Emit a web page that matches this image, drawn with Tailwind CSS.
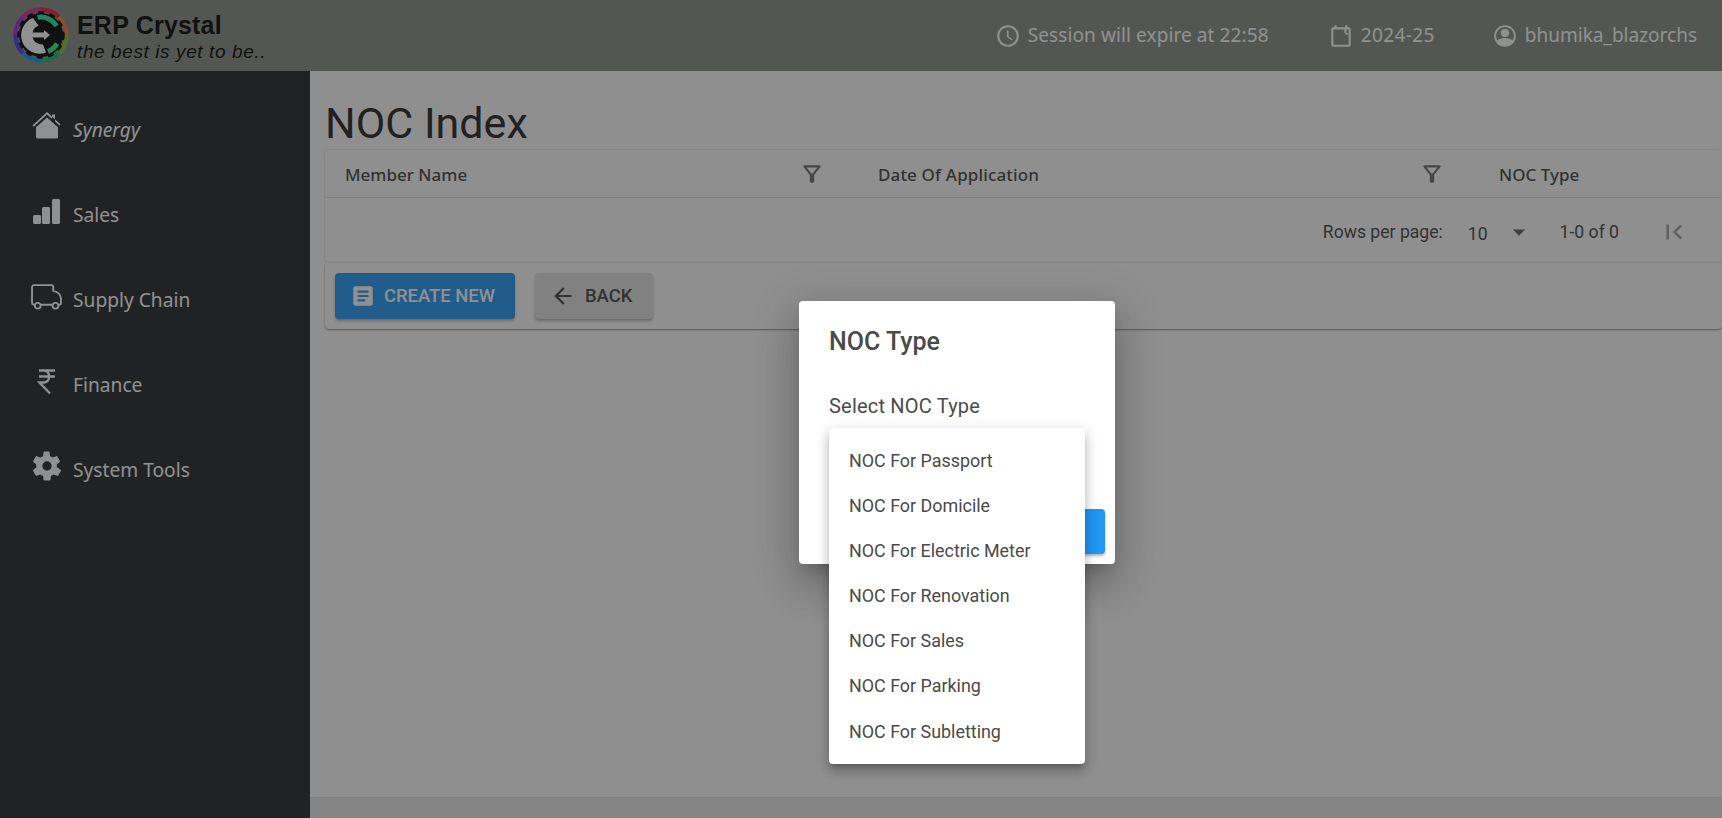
<!DOCTYPE html>
<html lang="en">
<head>
  <meta charset="UTF-8">
  <title>NOC Index</title>
  <script src="https://cdn.jsdelivr.net/npm/@tailwindcss/browser@4"></script>
</head>
<body class="relative h-screen w-screen overflow-hidden bg-[#fdfdfd] font-['Roboto',sans-serif]">
  <div class="flex h-full flex-col">
    <!-- Top bar -->
    <header class="flex h-[71px] shrink-0 items-center bg-[#878b85] font-['Noto_Sans',sans-serif] text-white">
      <svg class="ml-[13px] h-[57px] w-[57px] shrink-0" viewBox="0 0 57 57">
        <g fill="none" stroke-width="4.500">
          <path d="M28 2.500A25.500 25.500 0 0 1 46 10" stroke="#e82030"/>
          <path d="M46 10A25.500 25.500 0 0 1 53.500 28" stroke="#e88030"/>
          <path d="M53.500 28A25.500 25.500 0 0 1 46 46" stroke="#80c030"/>
          <path d="M46 46A25.500 25.500 0 0 1 28 53.500" stroke="#20b070"/>
          <path d="M28 53.500A25.500 25.500 0 0 1 10 46" stroke="#2090e8"/>
          <path d="M10 46A25.500 25.500 0 0 1 2.500 28" stroke="#4838e0"/>
          <path d="M2.500 28A25.500 25.500 0 0 1 10 10" stroke="#9030d0"/>
          <path d="M10 10A25.500 25.500 0 0 1 28 2.500" stroke="#d03088"/>
        </g>
        <circle cx="28" cy="28" r="22" fill="#000"/>
        <circle cx="28" cy="28" r="22.500" fill="none" stroke="#000" stroke-width="2.500" stroke-linecap="round" stroke-dasharray="4 7.500"/>
        <path d="M24.500 10.400A18 18 0 0 1 43.500 19" fill="none" stroke="#20e8a0" stroke-width="5"/>
        <path d="M44 36.500A18 18 0 0 1 35 44.600" fill="none" stroke="#30f070" stroke-width="5"/>
        <path d="M20 11A18 18 0 0 0 33 45.500L30 37.500A10 10 0 0 1 19.500 30.500H31V33L37 28L31 23V25.500H19.500A10 10 0 0 1 25.500 18.500Z" fill="#fff"/>
      </svg>
      <div class="ml-[7px] flex translate-y-[1px] flex-col font-['Liberation_Sans',sans-serif] text-black">
        <span class="text-[25px] leading-[27px] font-bold tracking-[0.2px]">ERP Crystal</span>
        <span class="pt-[2px] text-[19px] leading-[21px] tracking-[0.6px] italic">the best is yet to be..</span>
      </div>
      <div class="ml-auto flex items-center pr-[25px] text-[19px]">
        <svg class="mr-[7px] h-[26px] w-[26px] fill-current" viewBox="0 0 24 24"><path d="M11.990 2C6.470 2 2 6.480 2 12s4.470 10 9.990 10C17.520 22 22 17.520 22 12S17.520 2 11.990 2zM12 20c-4.420 0-8-3.580-8-8s3.580-8 8-8 8 3.580 8 8-3.580 8-8 8zm.5-13H11v6l4.500 3.150.75-1.230-3.750-2.670z"/></svg>
        <span class="tracking-[0.1px]">Session will expire at 22:58</span>
        <svg class="mr-[7px] ml-[59px] h-[26px] w-[26px] fill-current" viewBox="0 0 24 24"><path d="M19 4h-1V2h-2v2H8V2H6v2H5c-1.100 0-2 .9-2 2v14c0 1.100.9 2 2 2h14c1.100 0 2-.9 2-2V6c0-1.100-.9-2-2-2zm0 16H5V6h10v3h2V6h2v14zm-3-9h2V9h-2v2z"/></svg>
        <span class="tracking-[0.4px]">2024-25</span>
        <svg class="mr-[7px] ml-[57px] h-[26px] w-[26px] fill-current" viewBox="0 0 24 24"><path fill-rule="evenodd" d="M12 2C6.480 2 2 6.480 2 12s4.480 10 10 10 10-4.480 10-10S17.520 2 12 2zm0 1.800c4.500 0 8.200 3.700 8.200 8.200 0 1.500-.4 2.900-1.100 4.100C17.600 14.600 15 13.800 12 13.800s-5.600.8-7.100 2.300c-.7-1.200-1.100-2.600-1.100-4.100 0-4.500 3.700-8.200 8.200-8.200zM12 5.500a3.800 3.800 0 1 0 0 7.600 3.800 3.800 0 0 0 0-7.600z"/></svg>
        <span>bhumika_blazorchs</span>
      </div>
    </header>

    <div class="flex min-h-0 flex-1">
      <!-- Sidebar -->
      <aside class="flex w-[310px] shrink-0 flex-col bg-[#212325] pt-[17px] pl-[31px] font-['Noto_Sans',sans-serif] text-[19.200px] text-white">
        <a class="flex h-[85px] items-center">
          <svg class="h-[30px] w-[30px] -translate-y-[5px] fill-current" viewBox="0 0 30 30"><path d="M16 1L1.500 14.500l1.200 1.300L16 3.500l5 4.400V3.500h3v7l4.300 4 1.200-1.300L16 1z"/><path d="M16 6.500L5 16.300V26a1.500 1.500 0 0 0 1.500 1.500h19A1.500 1.500 0 0 0 27 26V16.300L16 6.500z"/></svg>
          <span class="ml-[12px] italic">Synergy</span>
        </a>
        <a class="flex h-[85px] items-center">
          <svg class="h-[30px] w-[30px] -translate-y-[3px] fill-current" viewBox="0 0 30 30"><rect x="2" y="17" width="8" height="9" rx="1.500"/><rect x="11" y="9" width="8" height="17" rx="1.500"/><rect x="21" y="1" width="8" height="25" rx="1.500"/></svg>
          <span class="ml-[12px]">Sales</span>
        </a>
        <a class="flex h-[85px] items-center">
          <svg class="h-[31px] w-[31px] -translate-y-[4px]" viewBox="0 0 30 30" fill="none" stroke="currentColor" stroke-width="1.800"><path d="M3.500 23H3A2 2 0 0 1 1 21V6A2 2 0 0 1 3 4H20A1.500 1.500 0 0 1 21.500 5.500V9.500C25.500 10 29 13 29 17V21.500A1.500 1.500 0 0 1 27.500 23H27M9.500 23H20.500"/><circle cx="6.500" cy="24" r="2.800"/><circle cx="23.700" cy="24" r="2.800"/></svg>
          <span class="ml-[11px]">Supply Chain</span>
        </a>
        <a class="flex h-[85px] items-center">
          <svg class="h-[30px] w-[30px] -translate-y-[5px]" viewBox="0 0 30 30" fill="none" stroke="currentColor" stroke-width="2.400"><path d="M8 4.500H24M8 10.500H24M8 4.500H12.500C20 4.500 20 16.500 12.500 16.500H8.500L19 27.500"/></svg>
          <span class="ml-[12px]">Finance</span>
        </a>
        <a class="flex h-[85px] items-center">
          <svg class="h-[32px] w-[32px] -translate-y-[5px] fill-current" viewBox="0 0 24 24"><path fill-rule="evenodd" d="M19.300 13.200c.1-.4.100-.8.100-1.200s0-.8-.1-1.200l2.300-1.800c.2-.2.300-.5.100-.7l-2-3.500c-.1-.2-.4-.3-.7-.2l-2.700 1.100c-.6-.5-1.300-.9-2-1.100l-.4-2.900c0-.3-.3-.5-.5-.5H9.900c-.3 0-.5.200-.5.500L9 4.600c-.7.300-1.400.7-2 1.100L4.300 4.600c-.3-.1-.5 0-.7.200l-2 3.500c-.1.200-.1.500.1.700l2.300 1.800c0 .4-.1.800-.1 1.200s0 .8.100 1.200L1.700 15c-.2.200-.3.500-.1.700l2 3.500c.1.200.4.300.7.200L7 18.300c.6.500 1.300.9 2 1.100l.4 2.900c0 .3.300.5.500.5h4.200c.3 0 .5-.2.500-.5l.4-2.900c.7-.3 1.400-.7 2-1.100l2.700 1.100c.3.100.5 0 .7-.2l2-3.500c.1-.2.100-.5-.1-.7l-2.300-1.800zM12 15.500a3.500 3.500 0 1 1 0-7 3.500 3.500 0 0 1 0 7z"/></svg>
          <span class="ml-[10px]">System Tools</span>
        </a>
      </aside>

      <!-- Main -->
      <main class="flex min-w-0 flex-1 flex-col">
        <div class="flex-1 pt-[24px] pl-[15px]">
          <h1 class="h-[55px] text-[43px] leading-[57px] text-[#212121]">NOC Index</h1>
          <section class="rounded-[4px] shadow-[0_0_2px_rgba(0,0,0,0.25)]">
            <div class="flex h-[48px] items-center border-b border-[#dcdcdc] font-['Noto_Sans',sans-serif] text-[17px] font-medium text-[#424242]">
              <div class="flex w-[532px] shrink-0 items-center pl-[20px]">
                <span class="translate-y-[1px]">Member Name</span>
                <svg class="mr-[32px] ml-auto h-[26px] w-[26px] fill-[#6b6b6b]" viewBox="0 0 24 24"><path d="M7 6h10l-5.010 6.300L7 6zm-2.750-.39C6.270 8.200 10 13 10 13v6c0 .55.45 1 1 1h2c.55 0 1-.45 1-1v-6s3.730-4.800 5.750-7.390C20.260 4.950 19.790 4 18.950 4H5.040c-.83 0-1.300.95-.79 1.610z"/></svg>
              </div>
              <div class="flex w-[621px] shrink-0 items-center pl-[21px]">
                <span class="translate-y-[1px] tracking-[0.15px]">Date Of Application</span>
                <svg class="mr-[33px] ml-auto h-[26px] w-[26px] fill-[#6b6b6b]" viewBox="0 0 24 24"><path d="M7 6h10l-5.010 6.300L7 6zm-2.750-.39C6.270 8.200 10 13 10 13v6c0 .55.45 1 1 1h2c.55 0 1-.45 1-1v-6s3.730-4.800 5.750-7.390C20.260 4.950 19.790 4 18.950 4H5.040c-.83 0-1.300.95-.79 1.610z"/></svg>
              </div>
              <div class="translate-y-[1px] pl-[21px]">NOC Type</div>
            </div>
            <div class="flex h-[64px] items-center justify-end pt-[4px] pr-[33px] text-[17.600px] text-[#424242]">
              <span>Rows per page:</span>
              <span class="ml-[25px] translate-y-[2px]">10</span>
              <svg class="ml-[16px] h-[30px] w-[30px] fill-[#616161]" viewBox="0 0 24 24"><path d="M7 10l5 5 5-5z"/></svg>
              <span class="ml-[26px]">1-0 of 0</span>
              <svg class="ml-[40px] h-[30px] w-[30px] fill-[#9e9e9e]" viewBox="0 0 24 24"><path d="M18.410 16.590L13.820 12l4.590-4.590L17 6l-6 6 6 6zM6 6h2v12H6z"/></svg>
            </div>
          </section>
          <section class="flex h-[67px] items-center gap-[20px] rounded-[4px] pl-[10px] shadow-[0_1px_2px_rgba(0,0,0,0.45)]">
            <button class="flex h-[46px] w-[180px] items-center rounded-[4px] bg-[#2196f3] pl-[15px] text-[18.400px] font-medium text-white shadow-[0_2px_3px_rgba(0,0,0,0.3)]">
              <svg class="mr-[8px] h-[26px] w-[26px] fill-current" viewBox="0 0 24 24"><path d="M19 3H5c-1.100 0-2 .9-2 2v14c0 1.100.9 2 2 2h14c1.100 0 2-.9 2-2V5c0-1.100-.9-2-2-2zm-5 14H7v-2h7v2zm3-4H7v-2h10v2zm0-4H7V7h10v2z"/></svg>
              CREATE NEW
            </button>
            <button class="flex h-[46px] w-[118px] items-center rounded-[4px] bg-[#e0e0e0] pl-[15px] text-[18.400px] font-medium text-[#424242] shadow-[0_2px_3px_rgba(0,0,0,0.3)]">
              <svg class="mr-[9px] h-[26px] w-[26px] fill-current" viewBox="0 0 24 24"><path d="M20 11H7.830l5.590-5.590L12 4l-8 8 8 8 1.410-1.410L7.830 13H20v-2z"/></svg>
              BACK
            </button>
          </section>
        </div>
        <div class="h-[21px] shrink-0 border-t border-[#dfdfdf] bg-[#e9e9e9]"></div>
      </main>
    </div>
  </div>

  <!-- Modal scrim -->
  <div class="absolute inset-0 bg-[#212121]/50"></div>

  <!-- Dialog -->
  <div class="absolute top-[301px] left-[799px] h-[263px] w-[316px] rounded-[4px] bg-white pt-[26px] pl-[30px] text-[#4a4a4a] shadow-[0_11px_15px_-7px_rgba(0,0,0,0.2),0_24px_38px_3px_rgba(0,0,0,0.14),0_9px_46px_8px_rgba(0,0,0,0.12)]">
    <h2 class="text-[25px] leading-[30px] font-medium">NOC Type</h2>
    <p class="mt-[37px] text-[20px] leading-[24px] tracking-[0.2px]">Select NOC Type</p>
    <div class="absolute top-[208px] right-[10px] h-[45px] w-[90px] rounded-[4px] bg-[#2196f3] shadow-[0_2px_3px_rgba(0,0,0,0.3)]"></div>
  </div>

  <!-- Select dropdown -->
  <ul class="absolute top-[428px] left-[829px] flex h-[336px] w-[256px] flex-col justify-center rounded-[4px] bg-white pt-[1px] text-[17.900px] text-[#4a4a4a] shadow-[0_5px_5px_-3px_rgba(0,0,0,0.2),0_8px_10px_1px_rgba(0,0,0,0.14),0_3px_14px_2px_rgba(0,0,0,0.12)]">
    <li class="flex h-[45.200px] items-center pl-[20px]">NOC For Passport</li>
    <li class="flex h-[45.200px] items-center pl-[20px]">NOC For Domicile</li>
    <li class="flex h-[45.200px] items-center pl-[20px]">NOC For Electric Meter</li>
    <li class="flex h-[45.200px] items-center pl-[20px]">NOC For Renovation</li>
    <li class="flex h-[45.200px] items-center pl-[20px]">NOC For Sales</li>
    <li class="flex h-[45.200px] items-center pl-[20px]">NOC For Parking</li>
    <li class="flex h-[45.200px] items-center pl-[20px]">NOC For Subletting</li>
  </ul>
</body>
</html>
